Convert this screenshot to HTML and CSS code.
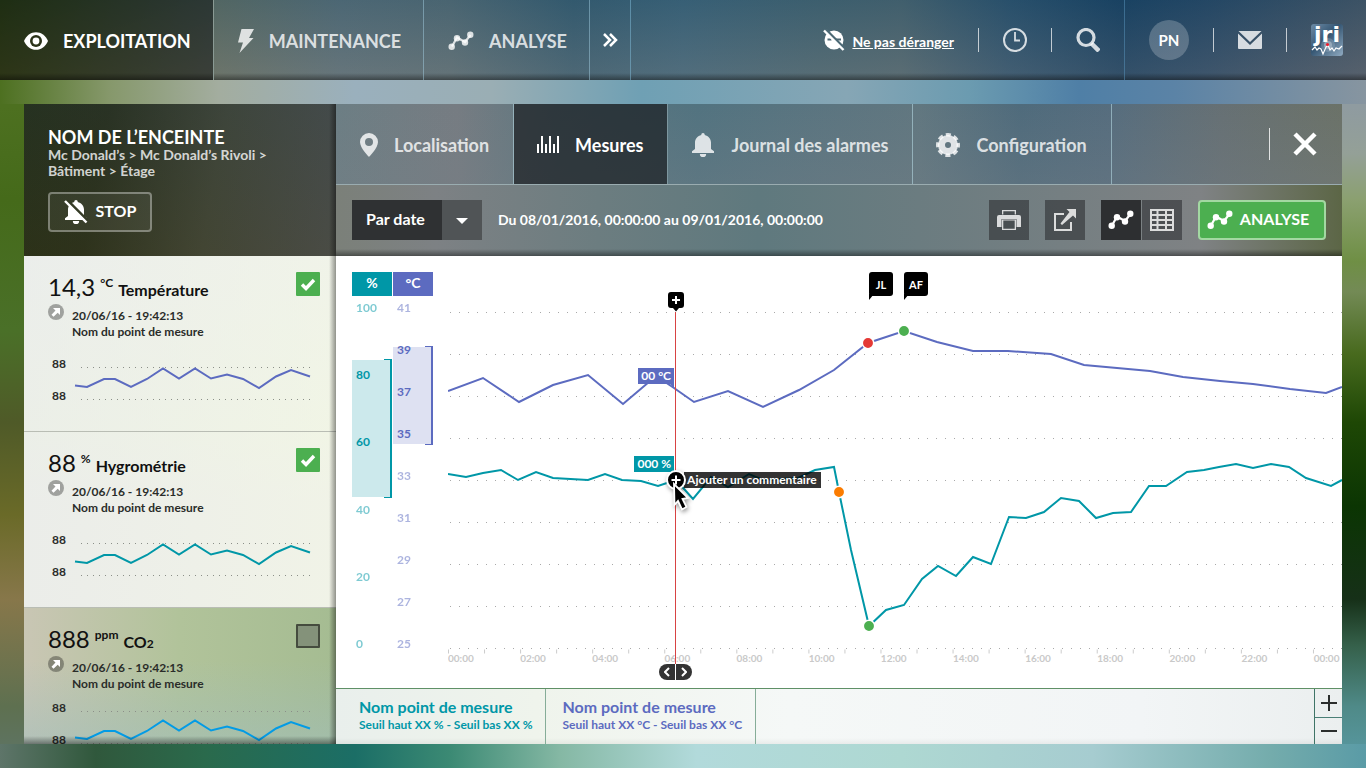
FILE: index.html
```html
<!DOCTYPE html>
<html lang="fr">
<head>
<meta charset="utf-8">
<meta name="viewport" content="width=device-width, initial-scale=1">
<title>Exploitation – Mesures</title>
<link rel="stylesheet" href="styles.css">
</head>
<body>
<svg class="defs" aria-hidden="true">
  <symbol id="i-curve" viewBox="0 0 26 20">
    <path d="M4 15.500 9 6.500 17 11 22.500 4" fill="none" stroke="currentColor" stroke-width="2.200"/>
    <circle cx="3.700" cy="15.700" r="3.200" fill="currentColor"/><circle cx="9" cy="7.300" r="3.200" fill="currentColor"/>
    <circle cx="17" cy="11.500" r="3.200" fill="currentColor"/><circle cx="22.300" cy="3.800" r="3.200" fill="currentColor"/>
  </symbol>
  <symbol id="i-bell" viewBox="0 0 24 24">
    <path d="M12 0a1.700 1.700 0 0 1 1.700 1.900C17.300 2.700 20 5.800 20 9.500V16l3 2.200V20H1v-1.800L4 16V9.500c0-3.700 2.700-6.800 6.300-7.600A1.700 1.700 0 0 1 12 0zM8.800 21h6.400a3.200 3.200 0 0 1-6.400 0z" fill="currentColor"/>
  </symbol>
  <symbol id="i-spark" viewBox="0 0 240 34">
    <path d="M1 18.500 13 20 30 12H41L57 20 73 12 89 1.500 105 11.500 121 1.500 137 11.500 153 7.500 169 12 185 21 202 9.500 217 3 236 9.500" fill="none" stroke="currentColor" stroke-width="2"/>
  </symbol>
  <symbol id="i-dots" viewBox="0 0 240 34">
    <path d="M7 .5H239M7 32.500H239" fill="none" stroke="#8b8f88" stroke-dasharray="1 5"/>
  </symbol>
  <symbol id="i-trend" viewBox="0 0 16 16">
    <circle cx="8" cy="8" r="8" fill="#000" fill-opacity=".32"/>
    <path d="M5 4h7v7L9.700 8.700 5.500 12.800 3.500 10.800 7.500 6.500z" fill="#fff"/>
  </symbol>
  <symbol id="i-check" viewBox="0 0 24 24">
    <path d="M6 12.500 10 16.500 18 8" fill="none" stroke="#fff" stroke-width="3.400"/>
  </symbol>
</svg>

<header class="topbar">
  <nav class="topnav">
    <a class="topnav-item is-active" href="#">
      <svg width="24" height="20" viewBox="0 0 24 20"><path d="M0 10C2.500 4.500 6.800 1.200 12 1.200S21.500 4.500 24 10c-2.500 5.500-6.800 8.800-12 8.800S2.500 15.500 0 10z" fill="currentColor"/><circle cx="12" cy="10" r="6" fill="#2b331a"/><circle cx="12" cy="10" r="3.400" fill="currentColor"/></svg>
      EXPLOITATION
    </a>
    <a class="topnav-item" href="#">
      <svg width="16" height="24" viewBox="0 0 16 24"><path d="M3.500 0H16L11 9h4.500L1.500 24 5 13.500H0z" fill="currentColor"/></svg>
      MAINTENANCE
    </a>
    <a class="topnav-item" href="#">
      <svg width="26" height="20"><use href="#i-curve"/></svg>
      ANALYSE
    </a>
    <button class="topnav-more" type="button" aria-label="Plus">
      <svg width="16" height="14" viewBox="0 0 16 14"><path d="M2 1 8 7l-6 6M8 1l6 6-6 6" fill="none" stroke="#fff" stroke-width="2.500"/></svg>
    </button>
  </nav>
  <div class="tools">
    <a class="quiet" href="#">
      <svg width="22" height="22" viewBox="0 0 22 22"><circle cx="11" cy="11" r="9.500" fill="#fff"/><path d="M4.500 10.500h4M13 10.500h5" stroke="#4c6975" stroke-width="2"/><path d="M2 0 22 20" stroke="#4c6975" stroke-width="3"/><path d="M1 1.500 20.500 21" stroke="#fff" stroke-width="2.400"/></svg>
      <span>Ne pas déranger</span>
    </a>
    <span class="rule"></span>
    <button class="tool" type="button" aria-label="Historique">
      <svg width="24" height="24" viewBox="0 0 24 24"><circle cx="12" cy="12" r="11" fill="none" stroke="currentColor" stroke-width="2"/><path d="M12 4v8.500h5" fill="none" stroke="currentColor" stroke-width="1.800"/></svg>
    </button>
    <span class="rule"></span>
    <button class="tool" type="button" aria-label="Rechercher">
      <svg width="24" height="24" viewBox="0 0 24 24"><circle cx="10" cy="9.500" r="8" fill="none" stroke="currentColor" stroke-width="3.200"/><path d="M15.500 15.500 23 23" stroke="currentColor" stroke-width="4.500"/></svg>
    </button>
  </div>
  <div class="account">
    <button class="avatar" type="button">PN</button>
    <span class="rule"></span>
    <button class="tool" type="button" aria-label="Messages">
      <svg width="24" height="18" viewBox="0 0 24 18"><path d="M.5 0h23L12 11z M0 2.500 12 14 24 2.500V17a1 1 0 0 1-1 1H1a1 1 0 0 1-1-1z" fill="currentColor"/></svg>
    </button>
    <span class="rule"></span>
    <svg class="logo" width="32" height="32" viewBox="0 0 32 32">
      <defs><linearGradient id="lg" x1="0" y1="0" x2="1" y2="1"><stop offset="0" stop-color="#6d8ba6"/><stop offset=".45" stop-color="#355673"/><stop offset="1" stop-color="#90abc2"/></linearGradient></defs>
      <rect width="32" height="32" rx="3" fill="url(#lg)"/>
      <circle cx="17" cy="21" r="7" fill="#9fb2c2" fill-opacity=".35"/><circle cx="17" cy="21" r="4" fill="#c2ccd5" fill-opacity=".5"/>
      <text x="16" y="18" text-anchor="middle" class="logo-text">jri</text>
      <path d="M1 26 4 23 6 26 8 24 10 25 12 30 15 23 17 21 19 26 21 24 23 27 25 24 28 25 31 22" fill="none" stroke="#fff" stroke-width="1.200"/>
      <circle cx="16.500" cy="20.500" r="1.600" fill="#f01d2d"/>
    </svg>
  </div>
</header>

<main class="workspace">
  <aside class="side">
    <div class="side-head">
      <h1>NOM DE L’ENCEINTE</h1>
      <p>Mc Donald’s &gt; Mc Donald’s Rivoli &gt; Bâtiment &gt; Étage</p>
      <button class="stop" type="button">
        <svg width="24" height="24" viewBox="0 0 24 24"><use href="#i-bell" width="24" height="24"/><path d="M2.500-.5 24.500 21.500" stroke="#363c27" stroke-width="3"/><path d="M1 1 22.500 22.500" stroke="#fff" stroke-width="2.400"/></svg>
        <span>STOP</span>
      </button>
    </div>
    <ul class="cards">
      <li class="card blue">
        <div class="card-top">
          <h2><span class="value">14,3</span> <sup>°C</sup> <label for="m1">Température</label></h2>
          <span class="tick"><input type="checkbox" id="m1" checked><svg width="24" height="24"><use href="#i-check"/></svg></span>
        </div>
        <div class="card-info"><svg width="16" height="16"><use href="#i-trend"/></svg><p>20/06/16 - 19:42:13<br>Nom du point de mesure</p></div>
        <div class="spark"><div class="scale"><span>88</span><span>88</span></div><svg width="240" height="34"><use href="#i-dots"/><use href="#i-spark"/></svg></div>
      </li>
      <li class="card teal">
        <div class="card-top">
          <h2><span class="value">88</span> <sup>%</sup> <label for="m2">Hygrométrie</label></h2>
          <span class="tick"><input type="checkbox" id="m2" checked><svg width="24" height="24"><use href="#i-check"/></svg></span>
        </div>
        <div class="card-info"><svg width="16" height="16"><use href="#i-trend"/></svg><p>20/06/16 - 19:42:13<br>Nom du point de mesure</p></div>
        <div class="spark"><div class="scale"><span>88</span><span>88</span></div><svg width="240" height="34"><use href="#i-dots"/><use href="#i-spark"/></svg></div>
      </li>
      <li class="card sky is-off">
        <div class="card-top">
          <h2><span class="value">888</span> <sup>ppm</sup> <label for="m3">CO<small>2</small></label></h2>
          <span class="tick"><input type="checkbox" id="m3"></span>
        </div>
        <div class="card-info"><svg width="16" height="16"><use href="#i-trend"/></svg><p>20/06/16 - 19:42:13<br>Nom du point de mesure</p></div>
        <div class="spark"><div class="scale"><span>88</span><span>88</span></div><svg width="240" height="42"><use href="#i-dots" width="240" height="34"/><use href="#i-spark" y="8" width="240" height="34"/></svg></div>
      </li>
    </ul>
  </aside>

  <section class="panel">
    <div class="panel-head">
      <nav class="tabs">
        <a class="tab" href="#"><svg width="18" height="24" viewBox="0 0 18 24"><path d="M9 0a9 9 0 0 1 9 9c0 6-9 15-9 15S0 15 0 9a9 9 0 0 1 9-9zm0 5a4 4 0 1 0 0 8 4 4 0 0 0 0-8z" fill="currentColor"/></svg>Localisation</a>
        <a class="tab is-active" href="#"><svg width="22" height="18" viewBox="0 0 22 18"><path d="M1 8v9M5 0v17M9 8v9M13 0v17M17 8v9M21 0v17" stroke="currentColor" stroke-width="2"/></svg>Mesures</a>
        <a class="tab" href="#"><svg width="24" height="24"><use href="#i-bell"/></svg>Journal des alarmes</a>
        <a class="tab" href="#"><svg width="24" height="24" viewBox="0 0 24 24"><circle cx="12" cy="12" r="6.500" fill="none" stroke="currentColor" stroke-width="7"/><circle cx="12" cy="12" r="10.300" fill="none" stroke="currentColor" stroke-width="3.400" stroke-dasharray="5 3.090" stroke-dashoffset="2.500"/></svg>Configuration</a>
      </nav>
      <div class="close-box">
        <button class="close" type="button" aria-label="Fermer"><svg width="24" height="24" viewBox="0 0 24 24"><path d="M2 2 22 22M22 2 2 22" stroke="#fff" stroke-width="4.500"/></svg></button>
      </div>
    </div>
    <div class="toolbar">
      <div class="period">
        <select aria-label="Période"><option>Par date</option></select>
        <svg width="12" height="6" viewBox="0 0 12 6"><path d="M0 0h12L6 6z" fill="#fff"/></svg>
      </div>
      <p class="range">Du 08/01/2016, 00:00:00 au 09/01/2016, 00:00:00</p>
      <button class="square" type="button" aria-label="Imprimer"><svg width="24" height="20" viewBox="0 0 24 20"><path d="M5 0h14v4.500h-1.300V1.300H6.300v3.200H5zM2 5h20a2 2 0 0 1 2 2v10h-4.500V9h-15v8H0V7a2 2 0 0 1 2-2zm3 4.500h14V20H5zm1.300 1v8.200h11.400v-8.200z" fill="currentColor"/></svg></button>
      <button class="square" type="button" aria-label="Exporter"><svg width="24" height="24" viewBox="0 0 24 24"><path d="M11 6H2v16h16v-8" fill="none" stroke="currentColor" stroke-width="2"/><path d="M13.500 1H23v9.500l-3-3L9 17 7.500 15.500 16.500 4z" fill="currentColor"/></svg></button>
      <div class="switch">
        <button class="square is-on" type="button" aria-label="Courbe"><svg width="26" height="20"><use href="#i-curve"/></svg></button>
        <button class="square" type="button" aria-label="Tableau"><svg width="24" height="22" viewBox="0 0 24 22"><path d="M1 1h22v20H1zM1 6h22M1 11h22M1 16h22M7.500 1v20M16 1v20" fill="none" stroke="currentColor" stroke-width="2"/></svg></button>
      </div>
      <button class="analyse" type="button"><svg width="26" height="20"><use href="#i-curve"/></svg><span>ANALYSE</span></button>
    </div>

    <div class="chart">
      <div class="axis teal">
        <div class="axis-unit">%</div>
        <div class="band band-teal"></div>
        <ol><li>100</li><li class="in">80</li><li class="in">60</li><li>40</li><li>20</li><li>0</li></ol>
      </div>
      <div class="axis blue">
        <div class="axis-unit">°C</div>
        <div class="band band-blue"></div>
        <ol><li>41</li><li class="in">39</li><li class="in">37</li><li class="in">35</li><li>33</li><li>31</li><li>29</li><li>27</li><li>25</li></ol>
      </div>
      <div class="plot">
        <svg class="curves" viewBox="448 256 894 432" preserveAspectRatio="none">
          <path d="M450 312.500H1342M450 354.500H1342M450 396.500H1342M450 438.500H1342M450 480.500H1342M450 522.500H1342M450 564.500H1342M450 606.500H1342M450 648.500H1342" stroke="#a9a9a9" stroke-dasharray="1 8" fill="none"/>
          <path d="M448 651.500H1342" stroke="#ccc" stroke-width="4" stroke-dasharray="1 35.040" fill="none"/>
          <g fill="none" stroke-width="2">
            <path class="line-blue" d="M448 391 483 378 519 402 553 385 588 375 623 404 656 376 674 388 694 402 728 391 763 407 799 390 834 370 868 343 904 331 937 342 973 351H1008L1051 354 1084 365 1150 371 1183 377 1220 381 1253 384 1290 389 1326 393 1342 387"/>
            <path class="line-teal" d="M448 474 466 477 483 473 501 470 518 480 536 472 553 478 588 480 605 474 622 480 641 481 658 486 676 480 693 499 711 477 728 487 749 474 763 480 798 478 815 470 834 467 839 492 851 550 869 626 886 610 904 605 922 579 938 566 956 576 973 557 991 564 1009 517 1026 518 1044 512 1061 498 1079 501 1096 518 1113 513 1131 512 1149 486H1166L1187 472 1204 470 1219 467 1236 464 1253 468 1271 464 1289 467 1306 478 1331 486 1342 480"/>
          </g>
          <g stroke="#fff" stroke-width="1.500">
            <circle cx="868" cy="343" r="5.700" fill="#e53935"/><circle cx="904" cy="331" r="5.700" fill="#4caf50"/>
            <circle cx="839" cy="492" r="5.700" fill="#fb7c00"/><circle cx="869" cy="626" r="5.700" fill="#4caf50"/>
          </g>
        </svg>
        <ol class="hours"><li>00:00</li><li>02:00</li><li>04:00</li><li>06:00</li><li>08:00</li><li>10:00</li><li>12:00</li><li>14:00</li><li>16:00</li><li>18:00</li><li>20:00</li><li>22:00</li><li>00:00</li></ol>
        <button class="note note-jl" type="button">JL</button>
        <button class="note note-af" type="button">AF</button>
        <div class="probe">
          <button class="pin" type="button" aria-label="Ajouter"><svg width="16" height="20" viewBox="0 0 16 20"><path d="M3 0h10a3 3 0 0 1 3 3v10a3 3 0 0 1-3 3h-2l-3 3.500L5 16H3a3 3 0 0 1-3-3V3a3 3 0 0 1 3-3z"/><path d="M8 4v8M4 8h8" stroke="#fff" stroke-width="2"/></svg></button>
          <span class="flag flag-blue">00 °C</span>
          <span class="flag flag-teal">000 %</span>
          <span class="tooltip">Ajouter un commentaire</span>
          <svg class="cursor" width="28" height="42" viewBox="0 0 28 42"><circle cx="10" cy="10" r="9" fill="#000" stroke="#fff" stroke-width="2"/><path d="M10 5.500v9M5.500 10h9" stroke="#fff" stroke-width="2"/><path d="M8 14 8.500 35 12 31 16 39.500 20.500 37 16.500 29 22 28z" fill="#000" stroke="#fff" stroke-width="1.800"/></svg>
          <div class="handle">
            <button type="button" aria-label="Reculer"><svg width="6" height="10" viewBox="0 0 6 10"><path d="M5 1 1 5l4 4" fill="none" stroke="#fff" stroke-width="2"/></svg></button>
            <button type="button" aria-label="Avancer"><svg width="6" height="10" viewBox="0 0 6 10"><path d="M1 1 5 5 1 9" fill="none" stroke="#fff" stroke-width="2"/></svg></button>
          </div>
        </div>
      </div>
    </div>

    <footer class="legend">
      <div class="legend-item teal"><h3>Nom point de mesure</h3><p>Seuil haut XX % - Seuil bas XX %</p></div>
      <div class="legend-item blue"><h3>Nom point de mesure</h3><p>Seuil haut XX °C - Seuil bas XX °C</p></div>
      <div class="zoom">
        <button type="button" aria-label="Agrandir"><svg width="16" height="16" viewBox="0 0 16 16"><path d="M0 8h16M8 0v16" stroke="#2b2e2d" stroke-width="2"/></svg></button>
        <button type="button" aria-label="Réduire"><svg width="16" height="16" viewBox="0 0 16 16"><path d="M0 8h16" stroke="#2b2e2d" stroke-width="2"/></svg></button>
      </div>
    </footer>
  </section>
</main>
</body>
</html>
```
FILE: styles.css
```css
* { box-sizing: border-box; margin: 0; padding: 0; }

:root {
  --teal: #0097a7;
  --blue: #5c6bc0;
  --green: #4caf50;
  --soft: rgba(255, 255, 255, .8);
}

body {
  height: 100vh;
  display: flex;
  flex-direction: column;
  font-family: Lato, "Liberation Sans", sans-serif;
  font-weight: 700;
  color: #fff;
  background:
    linear-gradient(90deg, #4d7020, #86986b 8%, #a3ad9f 16%, #9ab0bd 26%, #9aaeb4 36%, #6fa0b4 47%, #86a6b5 62%, #6b9bb0 71%, #4f7fa6 79%, #5b83a6 86%, #8795a0) top / 100% 104px no-repeat,
    linear-gradient(90deg, #5e7569, #30583c 7%, #2a6a4c 15%, #1b6e66 26%, #3c8a74 33%, #85b8a4 41%, #b2dadb 51%, #aed8d2 66%, #a6ccd0 80%, #74acac 93%, #5a9ba6) bottom / 100% 24px no-repeat,
    linear-gradient(180deg, #4d7020 14%, #456a1a 26%, #4a7028 43%, #4f5a28 55%, #6a6a28 67%, #87774a 78%, #5e7050 92%, #5e7569) left / 24px 100% no-repeat,
    linear-gradient(180deg, #8f9ba0 14%, #94a097 20%, #8ba070 26%, #6f8f45 34%, #738a55 38%, #486a1e 46%, #1e4705 55%, #0b3503 66%, #163018 78%, #35604a 84%, #4f8a88 92%, #5a9ba6) right / 24px 100% no-repeat,
    #7d8d88;
}

a { color: inherit; text-decoration: none; }
button, select, input { font: inherit; color: inherit; border: 0; background: none; border-radius: 0; cursor: pointer; }
button { display: flex; align-items: center; justify-content: center; }
svg { display: block; flex: none; }
ul, ol { list-style: none; }
.defs { position: absolute; width: 0; height: 0; }

/* Top bar */
.topbar {
  flex: none;
  height: 80px;
  display: flex;
  background:
    linear-gradient(0deg, rgba(0, 0, 0, .4), transparent 7px),
    linear-gradient(180deg, rgba(20, 60, 80, .25), rgba(130, 120, 110, .25)),
    linear-gradient(90deg, #445c14, #66746a 16%, #5e7580 25%, #5b727c 33%, #3d6378 42%, #436b82 50%, #4a6a78 60%, #4f6a76 66%, #2f5674 74%, #1b4468 82%, #284a6b 88%, #4a5a6c);
}
.topnav { display: flex; }
.topnav-item {
  display: flex;
  align-items: center;
  gap: 15px;
  padding: 2px 22px 0 24px;
  border-right: 1px solid rgba(170, 215, 235, .45);
  font-size: 18px;
  color: var(--soft);
}
.topnav-item.is-active { color: #fff; background: rgba(0, 0, 0, .45); border-color: #8a9a94; }
.topnav-more { width: 41px; border-right: 1px solid rgba(130, 190, 220, .5); }
.tools, .account { display: flex; align-items: center; gap: 24px; padding-right: 24px; }
.tools { margin-left: auto; border-right: 1px solid rgba(90, 150, 190, .5); }
.account { padding: 0 23px 0 24px; }
.quiet { display: flex; align-items: center; gap: 7px; font-size: 14px; }
.quiet span { text-decoration: underline; padding-top: 3px; }
.rule { width: 1px; height: 24px; background: rgba(255, 255, 255, .7); }
.tool { color: var(--soft); }
.avatar { width: 40px; height: 40px; border-radius: 50%; background: rgba(255, 255, 255, .22); font-size: 15px; }
.logo { overflow: visible; }
.logo-text { font-family: "DejaVu Sans", sans-serif; font-size: 22px; font-weight: 700; fill: #fff; }

/* Workspace */
.workspace {
  flex: 1;
  min-height: 0;
  display: grid;
  grid-template-columns: 312px minmax(0, 1fr);
  padding: 24px;
}

/* Side column */
.side { position: relative; display: flex; flex-direction: column; min-height: 0; }
.side::after {
  content: "";
  position: absolute;
  inset: 0;
  pointer-events: none;
  background: linear-gradient(270deg, rgba(0, 0, 0, .4), transparent 7px);
}
.side-head {
  height: 152px;
  padding: 23px 24px;
  background:
    linear-gradient(0deg, rgba(70, 66, 40, .25), rgba(50, 66, 76, .25)),
    linear-gradient(100deg, #222c12, #262d17 25%, #414636 60%, #4b4f4f);
}
.side-head h1 { font-size: 18px; line-height: 20px; }
.side-head p { font-size: 14px; line-height: 16px; color: var(--soft); }
.stop {
  width: 104px;
  height: 40px;
  margin-top: 13px;
  gap: 8px;
  border: 2px solid rgba(255, 255, 255, .35);
  border-radius: 4px;
  background: rgba(255, 255, 255, .06);
  font-size: 16px;
}
.stop span, .analyse span { padding-bottom: 3px; }
.cards {
  flex: 1;
  min-height: 0;
  overflow: hidden;
  color: #000;
  position: relative;
  background: linear-gradient(180deg, #eef0ee, #eff3e6 35%, #eeeeea 50%);
}
.cards::after {
  content: "";
  position: absolute;
  inset: auto 0 0;
  height: 8px;
  background: linear-gradient(0deg, rgba(0, 0, 0, .4), transparent);
}
.card {
  height: 176px;
  padding: 16px 16px 0 24px;
  border-bottom: 1px solid #b9bdb4;
  background: linear-gradient(90deg, rgba(233, 236, 233, .6), rgba(242, 246, 229, .6));
}
.card.is-off {
  border: 0;
  background:
    linear-gradient(0deg, rgba(160, 190, 190, .8), transparent 70%),
    linear-gradient(90deg, #c9c6b4, #b1c39a 50%, #a5bc92);
}
.card-top { display: flex; justify-content: space-between; height: 32px; }
.card h2 { display: flex; align-items: baseline; gap: 5px; font-size: 16px; line-height: 30px; font-weight: 700; }
.value { font-size: 24px; font-weight: 400; }
.card sup { font-size: 12px; line-height: 12px; vertical-align: baseline; align-self: flex-start; padding-top: 5px; }
.card small { font-size: 12px; }
.tick { position: relative; width: 24px; height: 24px; }
.tick input { appearance: none; display: block; width: 24px; height: 24px; border: 2px solid #454c3e; border-radius: 1px; background: #84927a; }
.tick input:checked { border: 0; background: var(--green); }
.tick svg { position: absolute; inset: 0; pointer-events: none; }
.card-info { display: flex; gap: 8px; font-size: 12px; line-height: 16px; color: #2a2c29; }
.card-info p { padding-top: 4px; }
.spark { display: flex; align-items: flex-start; margin-top: 27px; gap: 8px; padding-left: 4px; }
.is-off .spark { margin-top: 19px; }
.scale { margin-top: -19px; font-size: 12px; line-height: 32px; color: #2a2c29; }
.scale span { display: block; }
.blue { color: var(--blue); }
.teal { color: var(--teal); }
.sky { color: #039be5; }
.card h2 { color: #111; }

/* Panel */
.panel {
  display: flex;
  flex-direction: column;
  min-height: 0;
  background:
    linear-gradient(90deg, #7b8079, #7d8184 10%, #6c7d80 26%, #5f797e 42%, #6b7c80 58%, #7f8284 86%, #5c6646) top / 100% 152px no-repeat;
}
.panel-head {
  height: 81px;
  display: flex;
  justify-content: space-between;
  border-bottom: 1px solid #9aacb0;
  background:
    linear-gradient(0deg, rgba(120, 128, 134, .3), transparent),
    linear-gradient(90deg, #6c7e84, #767c82 12%, #5d7780 22%, #527380 36%, #5c7580 50%, #617780 58%, #4f6b7c 68%, #566d7e 77%, #667074 88%, #6b7268);
}
.tabs { display: flex; }
.tab {
  display: flex;
  align-items: center;
  gap: 16px;
  padding: 2px 24px 0 23px;
  border-right: 1px solid rgba(180, 215, 225, .6);
  font-size: 18px;
  color: var(--soft);
}
.tab:first-child { padding-left: 24px; }
.tab.is-active { color: #fff; background: rgba(20, 22, 24, .65); }
.close-box { display: flex; align-items: center; padding-right: 25px; }
.close { height: 32px; padding-left: 23px; border-left: 1px solid rgba(255, 255, 255, .8); }

.toolbar {
  height: 71px;
  display: flex;
  align-items: center;
  gap: 16px;
  padding: 0 16px 1px;
  background: linear-gradient(0deg, rgba(0, 0, 0, .4), transparent 7px);
}
.period { position: relative; }
.period select {
  appearance: none;
  display: block;
  width: 130px;
  height: 40px;
  padding: 0 0 4px 14px;
  font-size: 16px;
  background: linear-gradient(90deg, #2f3133 90px, #505456 90px);
}
.period svg { position: absolute; right: 14px; top: 18px; pointer-events: none; }
.range { flex: 1; padding-bottom: 2px; font-size: 14px; }
.square { width: 40px; height: 40px; background: rgba(45, 47, 50, .6); color: var(--soft); }
.square.is-on { background: #2d2f31; color: #fff; }
.switch { display: flex; gap: 1px; }
.analyse { width: 128px; height: 40px; padding-right: 8px; gap: 7px; border: 2px solid #a3d8a2; border-radius: 4px; background: var(--green); font-size: 16px; }

/* Chart */
.chart { flex: 1; min-height: 432px; display: flex; background: #fff; padding-left: 16px; }
.axis { position: relative; width: 40px; margin-right: 1px; padding-top: 16px; font-size: 12px; }
.axis-unit { height: 24px; line-height: 22px; text-align: center; color: #fff; font-size: 14px; }
.teal .axis-unit { background: var(--teal); }
.blue .axis-unit { background: var(--blue); }
.axis ol { position: relative; height: 352px; margin-top: 4px; padding-left: 4px; display: flex; flex-direction: column; justify-content: space-between; line-height: 16px; }
.axis li { opacity: .5; }
.axis li.in { opacity: 1; }
.band { position: absolute; left: 0; right: 0; }
.band::after { content: ""; position: absolute; top: -1px; bottom: -1px; right: 0; width: 6px; border: 1px solid currentColor; border-right-width: 2px; border-left: 0; }
.band-teal { top: 104px; height: 137px; background: linear-gradient(90deg, #cce9ec 38px, transparent 38px); }
.band-blue { top: 91px; height: 97px; background: linear-gradient(90deg, #dee1f2 38px, transparent 38px); }
.plot { position: relative; flex: 1; margin-left: 14px; min-width: 0; }
.curves { width: 100%; height: 432px; }
.line-blue { stroke: var(--blue); }
.line-teal { stroke: var(--teal); }
.hours { position: absolute; left: 0; right: 0; top: 395px; display: flex; overflow: hidden; font-size: 10px; line-height: 14px; color: #c9c9c9; }
.hours li { flex: 0 0 8.07%; }

.note { position: absolute; top: 16px; width: 24px; height: 24px; border-radius: 3px; background: #000; font-size: 11px; }
.note::after { content: ""; position: absolute; left: 0; top: 22px; border-top: 6px solid #000; border-right: 5px solid transparent; }
.note-jl { left: 47.1%; }
.note-af { left: 51%; }

.probe { position: absolute; left: 25.4%; top: 56px; width: 1px; height: 352px; background: #d84343; font-size: 12px; line-height: 16px; white-space: nowrap; }
.pin { position: absolute; left: -7px; top: -20px; }
.flag { position: absolute; right: 2px; padding: 0 3px; color: #fff; }
.flag::after { content: ""; position: absolute; right: 0; top: 16px; border-top: 4px solid; border-left: 4px solid transparent; }
.flag-blue { top: 56px; background: var(--blue); }
.flag-teal { top: 144px; background: var(--teal); }
.flag-blue::after { border-top-color: var(--blue); }
.flag-teal::after { border-top-color: var(--teal); }
.tooltip { position: absolute; left: 9px; top: 160px; padding: 0 4px 0 3px; background: rgba(0, 0, 0, .8); }
.cursor { position: absolute; left: -9px; top: 158px; filter: drop-shadow(1px 2px 2px rgba(0, 0, 0, .4)); }
.handle { position: absolute; left: -16px; top: 352px; display: flex; gap: 1px; }
.handle button { width: 16px; height: 16px; background: #333; border-radius: 8px 0 0 8px; }
.handle button:last-child { border-radius: 0 8px 8px 0; }

/* Legend */
.legend {
  height: 56px;
  display: flex;
  border-top: 1px solid #5f9066;
  background: linear-gradient(0deg, rgba(0, 0, 0, .05), transparent 6px), linear-gradient(90deg, #e9efec, #eff4ec 20%, #f5f8f7 45%, #f2f5f6 80%, #ebefef);
}
.legend-item { padding: 8px 13px 0 16px; border-right: 1px solid #86ad98; }
.legend-item:first-child { padding-left: 23px; }
.legend h3 { font-size: 16px; line-height: 20px; }
.legend p { font-size: 12px; line-height: 15px; }
.zoom { margin-left: auto; width: 28px; display: grid; grid-template-rows: 1fr 1fr; border-left: 1px solid #3f7467; }
.zoom button + button { border-top: 1px solid #4a7f76; }
```
